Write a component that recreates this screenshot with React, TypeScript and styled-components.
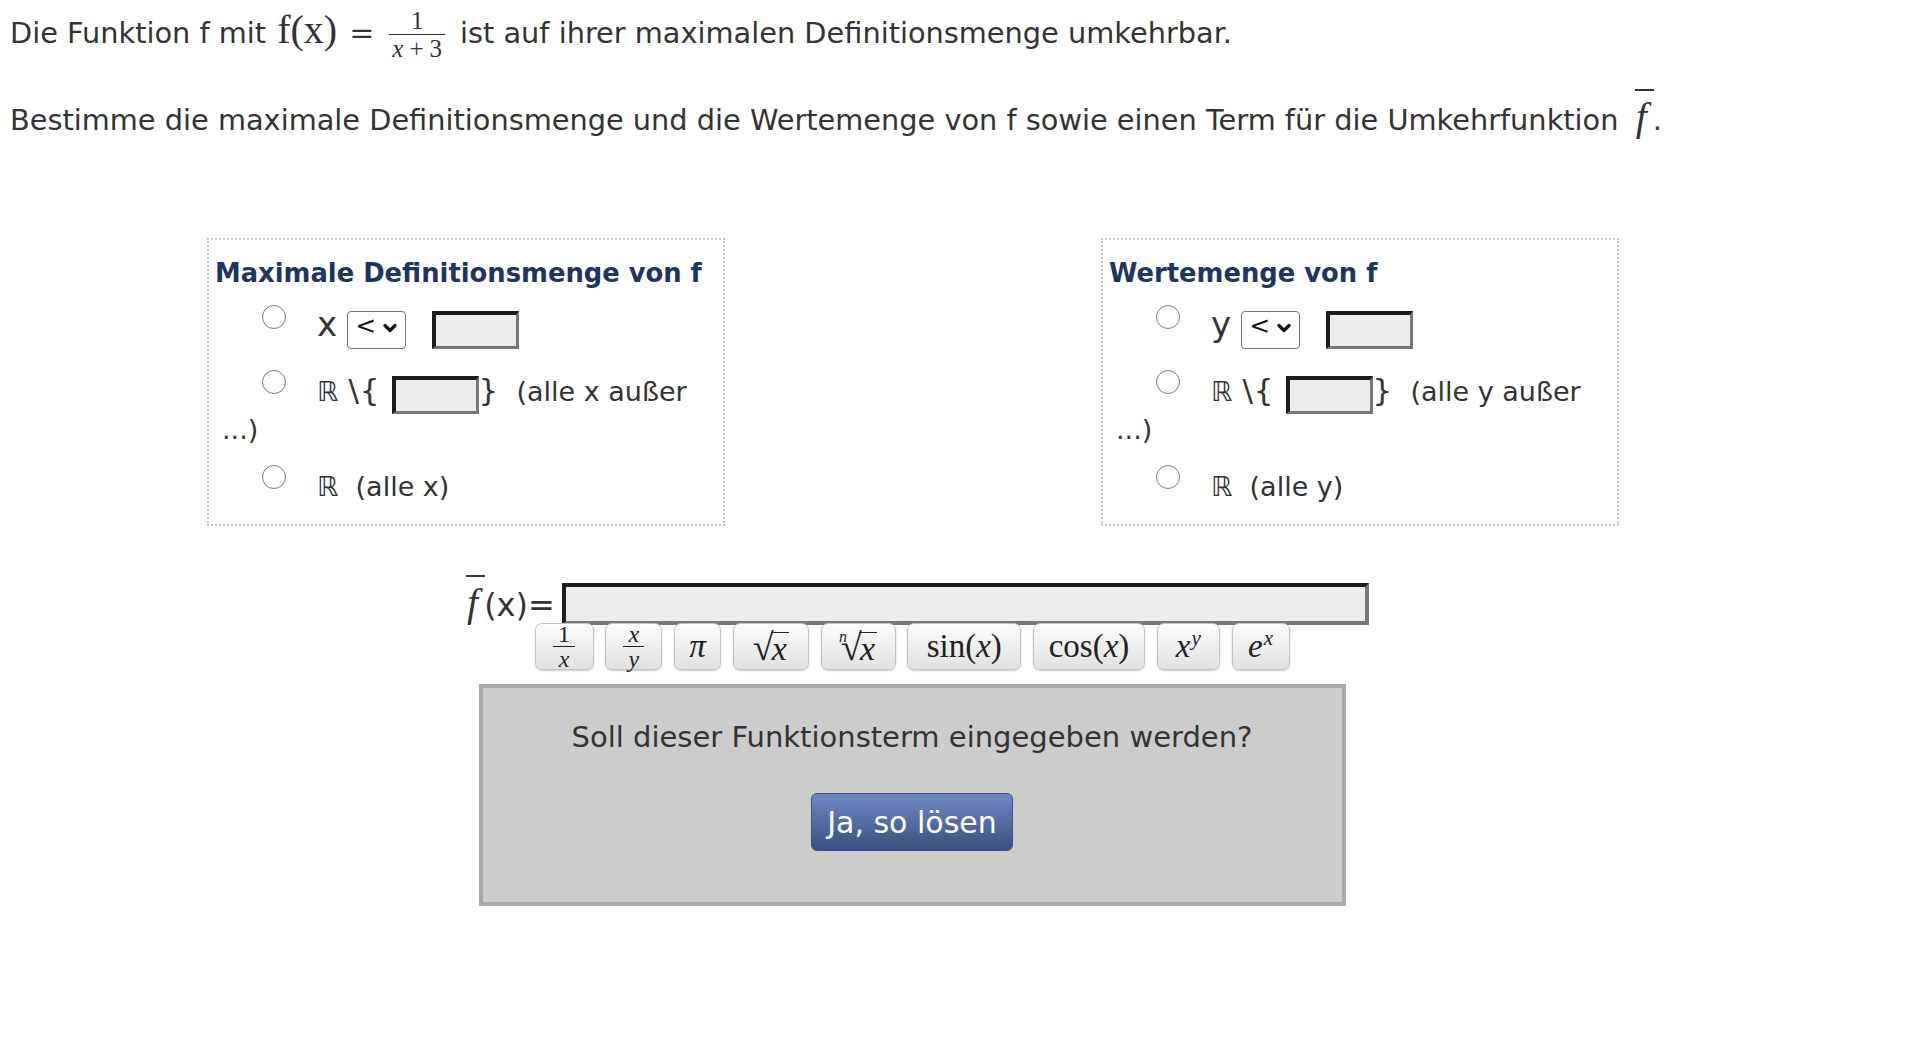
import React from "react";
import styled, { createGlobalStyle } from "styled-components";
import { ChevronDown } from "lucide-react";

const GlobalStyle = createGlobalStyle`
  html, body { margin: 0; padding: 0; background: #fff; }
  body { font-family: "DejaVu Sans", Verdana, sans-serif; color: #333; }
`;

const Page = styled.div`
  width: 1804px;
  padding: 0 10px;
`;

const Para = styled.p<{ $top: number }>`
  margin: ${(p) => p.$top}px 0 0;
  font-size: 28.8px;
  line-height: 44px;
  white-space: nowrap;
`;

const MathUp = styled.span`
  font-family: "Liberation Serif", "DejaVu Serif", serif;
  font-size: 40px;
  margin-left: 11px;
`;

const MathEq = styled.span`
  font-family: "DejaVu Serif", serif;
  font-size: 30px;
  margin: 0 2px 0 12px;
`;

const Frac = styled.span`
  display: inline-flex;
  flex-direction: column;
  align-items: center;
  vertical-align: middle;
  font-family: "Liberation Serif", "DejaVu Serif", serif;
  font-size: 25px;
  line-height: 0.9;
  margin: -9px 15px -9px 13px;
`;

const Num = styled.span`
  padding: 0 3px 2px;
`;

const Den = styled.span`
  align-self: stretch;
  text-align: center;
  border-top: 1.5px solid #333;
  padding: 3px 3px 0;
`;

const It = styled.i`
  font-style: italic;
`;

const Plus = styled.span`
  margin: 0 6px;
`;

const FBar = styled.span<{ $size: number }>`
  position: relative;
  display: inline-block;
  font-family: "Liberation Serif", "DejaVu Serif", serif;
  font-style: italic;
  font-size: ${(p) => p.$size}px;
  line-height: 0.9;
  padding: 0 6px 0 8px;
  &::before {
    content: "";
    position: absolute;
    left: 7px;
    width: 19px;
    top: -10px;
    height: 2px;
    background: #333;
  }
`;

const Columns = styled.div`
  display: grid;
  grid-template-columns: 518px 518px;
  column-gap: 376px;
  padding-left: 197px;
  margin-top: 96px;
`;

const Box = styled.div`
  box-sizing: border-box;
  height: 288px;
  border: 2px dotted #c4c4c4;
  padding: 17px 20px 0 6px;
`;

const BoxTitle = styled.div`
  font-size: 25.8px;
  font-weight: bold;
  line-height: 32px;
  color: #1e3561;
  white-space: nowrap;
`;

const Row = styled.div<{ $mt: number }>`
  margin-top: ${(p) => p.$mt}px;
  padding-left: 7px;
  font-size: 27px;
  line-height: 38px;
  color: #333;
`;

const Radio = styled.input.attrs({ type: "radio" })`
  appearance: none;
  box-sizing: border-box;
  width: 24px;
  height: 24px;
  margin: -4px 31px 0 40px;
  border: 1.8px solid #767676;
  border-radius: 50%;
  background: #fff;
  vertical-align: 7px;
`;

const VarName = styled.span`
  font-size: 34px;
  line-height: 0;
  margin-right: 10px;
`;

const Brace = styled.span<{ $ml?: number }>`
  font-size: 31px;
  line-height: 0;
  letter-spacing: 1px;
  margin-left: ${(p) => p.$ml ?? 0}px;
`;

const FakeSelect = styled.span`
  display: inline-flex;
  align-items: flex-start;
  box-sizing: border-box;
  width: 59px;
  height: 38px;
  margin-bottom: -3px;
  padding: 1px 0 0 7px;
  gap: 4px;
  border: 1.8px solid #767676;
  border-radius: 4px;
  background: #fff;
  font-size: 25px;
  line-height: 26px;
  color: #111;
  vertical-align: middle;
  svg {
    margin-top: 5px;
  }
`;

const Field = styled.input<{ $ml: number }>`
  box-sizing: border-box;
  width: 87px;
  height: 38px;
  margin: 0 0 -3px ${(p) => p.$ml}px;
  padding: 0;
  border-style: solid;
  border-width: 4px 3px 3px 4px;
  border-color: #1c1c1c #777 #777 #1c1c1c;
  background: #ececec;
  vertical-align: middle;
`;

const FuncRow = styled.div`
  display: flex;
  align-items: center;
  margin-top: 57px;
  padding-left: 449px;
`;

const FuncLabel = styled.span`
  box-sizing: border-box;
  width: 103px;
  padding-right: 12px;
  text-align: right;
  font-size: 32px;
  white-space: nowrap;
`;

const FuncInput = styled.input`
  box-sizing: border-box;
  width: 807px;
  height: 42px;
  margin: 0;
  border-style: solid;
  border-width: 4px;
  border-color: #1c1c1c #777 #777 #1c1c1c;
  background: #ececec;
`;

const Keypad = styled.div`
  display: flex;
  justify-content: center;
  gap: 11.75px;
  margin-top: -2px;
`;

const Key = styled.button<{ $w: number }>`
  box-sizing: border-box;
  width: ${(p) => p.$w}px;
  height: 47px;
  padding: 0;
  display: flex;
  align-items: center;
  justify-content: center;
  border: 1.8px solid #c2c2c2;
  border-radius: 7px;
  background: linear-gradient(#fbfbfb, #e2e2e2);
  box-shadow: 0 1px 2px rgba(0, 0, 0, 0.2);
  font-family: "Liberation Serif", "DejaVu Serif", serif;
  font-size: 33px;
  line-height: 1;
  color: #222;
`;

const KeyText = styled.span`
  white-space: nowrap;
`;

const KeyFrac = styled.span`
  display: inline-flex;
  flex-direction: column;
  align-items: center;
  font-size: 24px;
  line-height: 0.85;
  span + span {
    border-top: 1.5px solid #222;
    padding-top: 2px;
    align-self: stretch;
    text-align: center;
  }
  span:first-child {
    padding: 0 5px 1px;
  }
`;

const Rad = styled.span`
  display: inline-flex;
  align-items: flex-end;
  font-size: 38px;
  line-height: 1;
`;

const RadIndex = styled.span`
  font-size: 16px;
  font-style: italic;
  margin-right: -6px;
  align-self: flex-start;
  margin-top: 1px;
`;

const RadBody = styled.span`
  font-style: italic;
  font-size: 34px;
  border-top: 1.8px solid #222;
  padding: 0 2px 0 1px;
  margin-left: -3px;
  line-height: 0.95;
`;

const Sup = styled.sup`
  font-size: 21px;
  font-style: italic;
  vertical-align: 12px;
  line-height: 0;
  margin-left: 1px;
`;

const Panel = styled.div`
  box-sizing: border-box;
  width: 867px;
  height: 222px;
  margin: 14px auto 0;
  border: 4px solid #a9a9a9;
  background: #cccccc;
  padding-top: 29px;
  text-align: center;
`;

const PanelText = styled.div`
  font-size: 29px;
  line-height: 40px;
  color: #333;
`;

const SolveButton = styled.button`
  box-sizing: border-box;
  width: 202px;
  height: 58px;
  margin-top: 36px;
  border: 1px solid #3d5285;
  border-radius: 6px;
  background: linear-gradient(#6c8ac7, #3b4f7f);
  color: #fff;
  font-family: "DejaVu Sans", Verdana, sans-serif;
  font-size: 30px;
  padding: 0;
`;

type BoxProps = { title: string; v: string };

const SetBox: React.FC<BoxProps> = ({ title, v }) => (
  <Box>
    <BoxTitle>{title}</BoxTitle>
    <Row $mt={18.5}>
      <Radio name={title} />
      <VarName>{v}</VarName>
      <FakeSelect>
        <span>&lt;</span>
        <ChevronDown size={20} strokeWidth={4} color="#111" />
      </FakeSelect>
      <Field $ml={26} />
    </Row>
    <Row $mt={27.6}>
      <Radio name={title} />
      ℝ<Brace $ml={10}>{"\\{"}</Brace>
      <Field $ml={11} />
      <Brace>{"}"}</Brace>
      {"\u00a0 (alle " + v + " außer ...)"}
    </Row>
    <Row $mt={18.6}>
      <Radio name={title} />
      {"ℝ\u00a0 (alle " + v + ")"}
    </Row>
  </Box>
);

export default function App() {
  return (
    <Page>
      <GlobalStyle />
      <Para $top={8}>
        Die Funktion f mit
        <MathUp>
          f(x)<MathEq>=</MathEq>
        </MathUp>
        <Frac>
          <Num>1</Num>
          <Den>
            <It>x</It>
            <Plus>+</Plus>3
          </Den>
        </Frac>
        ist auf ihrer maximalen Definitionsmenge umkehrbar.
      </Para>
      <Para $top={43}>
        Bestimme die maximale Definitionsmenge und die Wertemenge von f sowie einen Term für die
        Umkehrfunktion <FBar $size={40}>f</FBar>.
      </Para>

      <Columns>
        <SetBox title="Maximale Definitionsmenge von f" v="x" />
        <SetBox title="Wertemenge von f" v="y" />
      </Columns>

      <FuncRow>
        <FuncLabel>
          <FBar $size={40}>f</FBar>(x)=
        </FuncLabel>
        <FuncInput />
      </FuncRow>

      <Keypad>
        <Key $w={59}>
          <KeyFrac>
            <span>1</span>
            <span>
              <It>x</It>
            </span>
          </KeyFrac>
        </Key>
        <Key $w={57}>
          <KeyFrac>
            <span>
              <It>x</It>
            </span>
            <span>
              <It>y</It>
            </span>
          </KeyFrac>
        </Key>
        <Key $w={47}>
          <KeyText>
            <It>π</It>
          </KeyText>
        </Key>
        <Key $w={76}>
          <Rad>
            √<RadBody>x</RadBody>
          </Rad>
        </Key>
        <Key $w={75}>
          <Rad>
            <RadIndex>n</RadIndex>√<RadBody>x</RadBody>
          </Rad>
        </Key>
        <Key $w={114}>
          <KeyText>
            sin(<It>x</It>)
          </KeyText>
        </Key>
        <Key $w={112}>
          <KeyText>
            cos(<It>x</It>)
          </KeyText>
        </Key>
        <Key $w={63}>
          <KeyText>
            <It>x</It>
            <Sup>y</Sup>
          </KeyText>
        </Key>
        <Key $w={58}>
          <KeyText>
            <It>e</It>
            <Sup>x</Sup>
          </KeyText>
        </Key>
      </Keypad>

      <Panel>
        <PanelText>Soll dieser Funktionsterm eingegeben werden?</PanelText>
        <SolveButton>Ja, so lösen</SolveButton>
      </Panel>
    </Page>
  );
}
